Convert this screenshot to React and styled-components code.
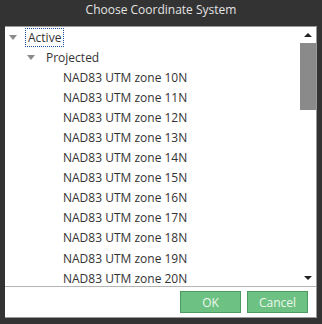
import styled, { createGlobalStyle } from 'styled-components';

const Global = createGlobalStyle`
  html, body { margin: 0; padding: 0; background: #333333; }
  body { font-family: "Open Sans", "Noto Sans", sans-serif; }
`;

const Dialog = styled.div`
  width: 322px;
  height: 324px;
  background: #333333;
  display: flex;
  flex-direction: column;
  box-sizing: border-box;
  padding: 0 5px 6px 5px;
`;

const Title = styled.div`
  height: 26px;
  line-height: 19px;
  text-align: center;
  color: #e4e4e4;
  font-size: 12px;
`;

const Panel = styled.div`
  flex: 1;
  background: #ffffff;
  border-top: 1px solid #9a9a9a;
  border-right: 1px solid #9a9a9a;
  border-bottom: 1px solid #9a9a9a;
  display: flex;
  flex-direction: column;
`;

const ListArea = styled.div`
  height: 259px;
  display: flex;
  border-bottom: 1px solid #b4b4b4;
`;

const Tree = styled.div`
  flex: 1;
  overflow: hidden;
`;

const Row = styled.div`
  height: 20.1px;
  display: flex;
  align-items: center;
  padding-left: ${p => p.$indent}px;
  font-size: 12px;
  color: #333;
`;

const Caret = styled.span`
  width: 0;
  height: 0;
  border-left: 4px solid transparent;
  border-right: 4px solid transparent;
  border-top: 5px solid #8a8a8a;
  margin-right: 8px;
`;

const Label = styled.span`
  padding: 0 2px;
  border: 1px dotted ${p => (p.$focus ? '#1a4d9a' : 'transparent')};
  line-height: 17px;
`;

const Scrollbar = styled.div`
  width: 16px;
  display: flex;
  flex-direction: column;
  align-items: center;
`;

const Arrow = styled.div`
  height: 16px;
  width: 16px;
  display: flex;
  align-items: center;
  justify-content: center;
  &::after {
    content: '';
    border-left: 4px solid transparent;
    border-right: 4px solid transparent;
    ${p => (p.$up ? 'border-bottom: 4px solid #222;' : 'border-top: 4px solid #222;')}
  }
`;

const Track = styled.div`
  flex: 1;
  width: 16px;
`;

const Thumb = styled.div`
  width: 16px;
  height: 67px;
  background: #8a8a8a;
`;

const Footer = styled.div`
  flex: 1;
  display: flex;
  justify-content: flex-end;
  align-items: center;
  gap: 6px;
  padding-right: 8px;
`;

const Button = styled.button`
  width: 61px;
  height: 22px;
  background: #6dc283;
  border: 1px solid #4e9a62;
  color: #eef8ee;
  font-family: "Open Sans", "Noto Sans", sans-serif;
  font-size: 12px;
  padding: 0;
`;

const zones = [10, 11, 12, 13, 14, 15, 16, 17, 18, 19, 20];

export default function App() {
  return (
    <>
      <Global />
      <Dialog>
        <Title>Choose Coordinate System</Title>
        <Panel>
          <ListArea>
            <Tree>
              <Row $indent={4}>
                <Caret />
                <Label $focus>Active</Label>
              </Row>
              <Row $indent={22}>
                <Caret />
                <Label>Projected</Label>
              </Row>
              {zones.map(z => (
                <Row key={z} $indent={55}>
                  <Label>NAD83 UTM zone {z}N</Label>
                </Row>
              ))}
            </Tree>
            <Scrollbar>
              <Arrow $up />
              <Track>
                <Thumb />
              </Track>
              <Arrow />
            </Scrollbar>
          </ListArea>
          <Footer>
            <Button>OK</Button>
            <Button>Cancel</Button>
          </Footer>
        </Panel>
      </Dialog>
    </>
  );
}
